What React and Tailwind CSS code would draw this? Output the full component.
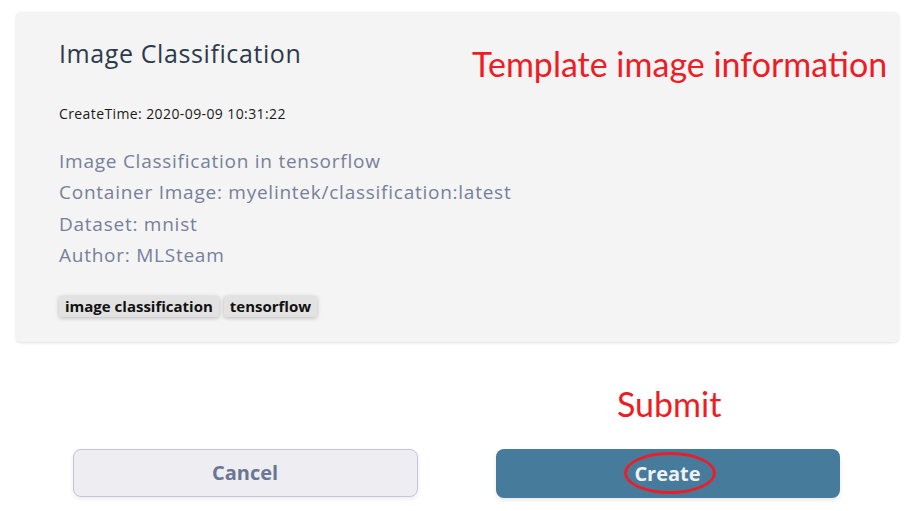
import React from "react";

export default function App() {
  const mont = { fontFamily: '"Open Sans", "Noto Sans", sans-serif' };
  const red = { fontFamily: 'Lato, "Liberation Sans", sans-serif' };
  return (
    <div className="relative w-[912px] h-[511px] bg-white overflow-hidden" style={mont}>
      <div className="pl-4 pt-3">
        <div className="relative w-[883px] h-[330px] bg-[#f4f4f4] rounded-[5px] shadow-[0_1px_3px_rgba(0,0,0,0.12)] pl-[43px] pt-[24px]">
          <div className="text-[25px] leading-[34px] tracking-[0.6px] text-[#2d3a4c]">Image Classification</div>
          <div className="mt-[34px] text-[14px] leading-[19px] tracking-[0.4px] text-[#1a1a1a]">CreateTime: 2020-09-09 10:31:22</div>
          <div className="mt-[23px] flex flex-col text-[19px] leading-[31.3px] tracking-[0.75px] text-[#76809b]">
            <span>Image Classification in tensorflow</span>
            <span>Container Image: myelintek/classification:latest</span>
            <span>Dataset: mnist</span>
            <span>Author: MLSteam</span>
          </div>
          <div className="mt-[25px] flex gap-[5px]">
            <span className="h-[21px] px-[6px] flex items-center bg-[#e2e2e2] rounded-[3px] shadow-[0_1px_4px_rgba(0,0,0,0.25)] text-[15px] font-bold text-[#111]">image classification</span>
            <span className="h-[21px] px-[6px] flex items-center bg-[#e2e2e2] rounded-[3px] shadow-[0_1px_4px_rgba(0,0,0,0.25)] text-[15px] font-bold text-[#111]">tensorflow</span>
          </div>
          <div className="absolute left-[456px] top-[32px] text-[34px] leading-[40px] text-[#ee1c25]" style={red}>
            Template image information
          </div>
        </div>
      </div>
      <div className="relative mt-[107px] flex justify-center gap-[78px]">
        <button className="w-[345px] h-[48px] rounded-[8px] bg-[#eeeef2] border border-[#c3c6da] shadow-[0_2px_4px_rgba(0,0,0,0.08)] text-[20px] font-bold text-[#6b7594]">
          Cancel
        </button>
        <button className="relative w-[344px] h-[49px] rounded-[8px] bg-[#467b9c] shadow-[0_2px_4px_rgba(0,0,0,0.1)] text-[20px] font-bold text-[#eef2f5]">
          Create
          <span className="absolute left-[128px] top-[3px] w-[92px] h-[42px] rounded-[50%] border-[3px] border-[#ee1c25]"></span>
        </button>
        <div className="absolute left-[617px] top-[-65px] text-[34px] leading-[40px] text-[#ee1c25]" style={red}>
          Submit
        </div>
      </div>
    </div>
  );
}
